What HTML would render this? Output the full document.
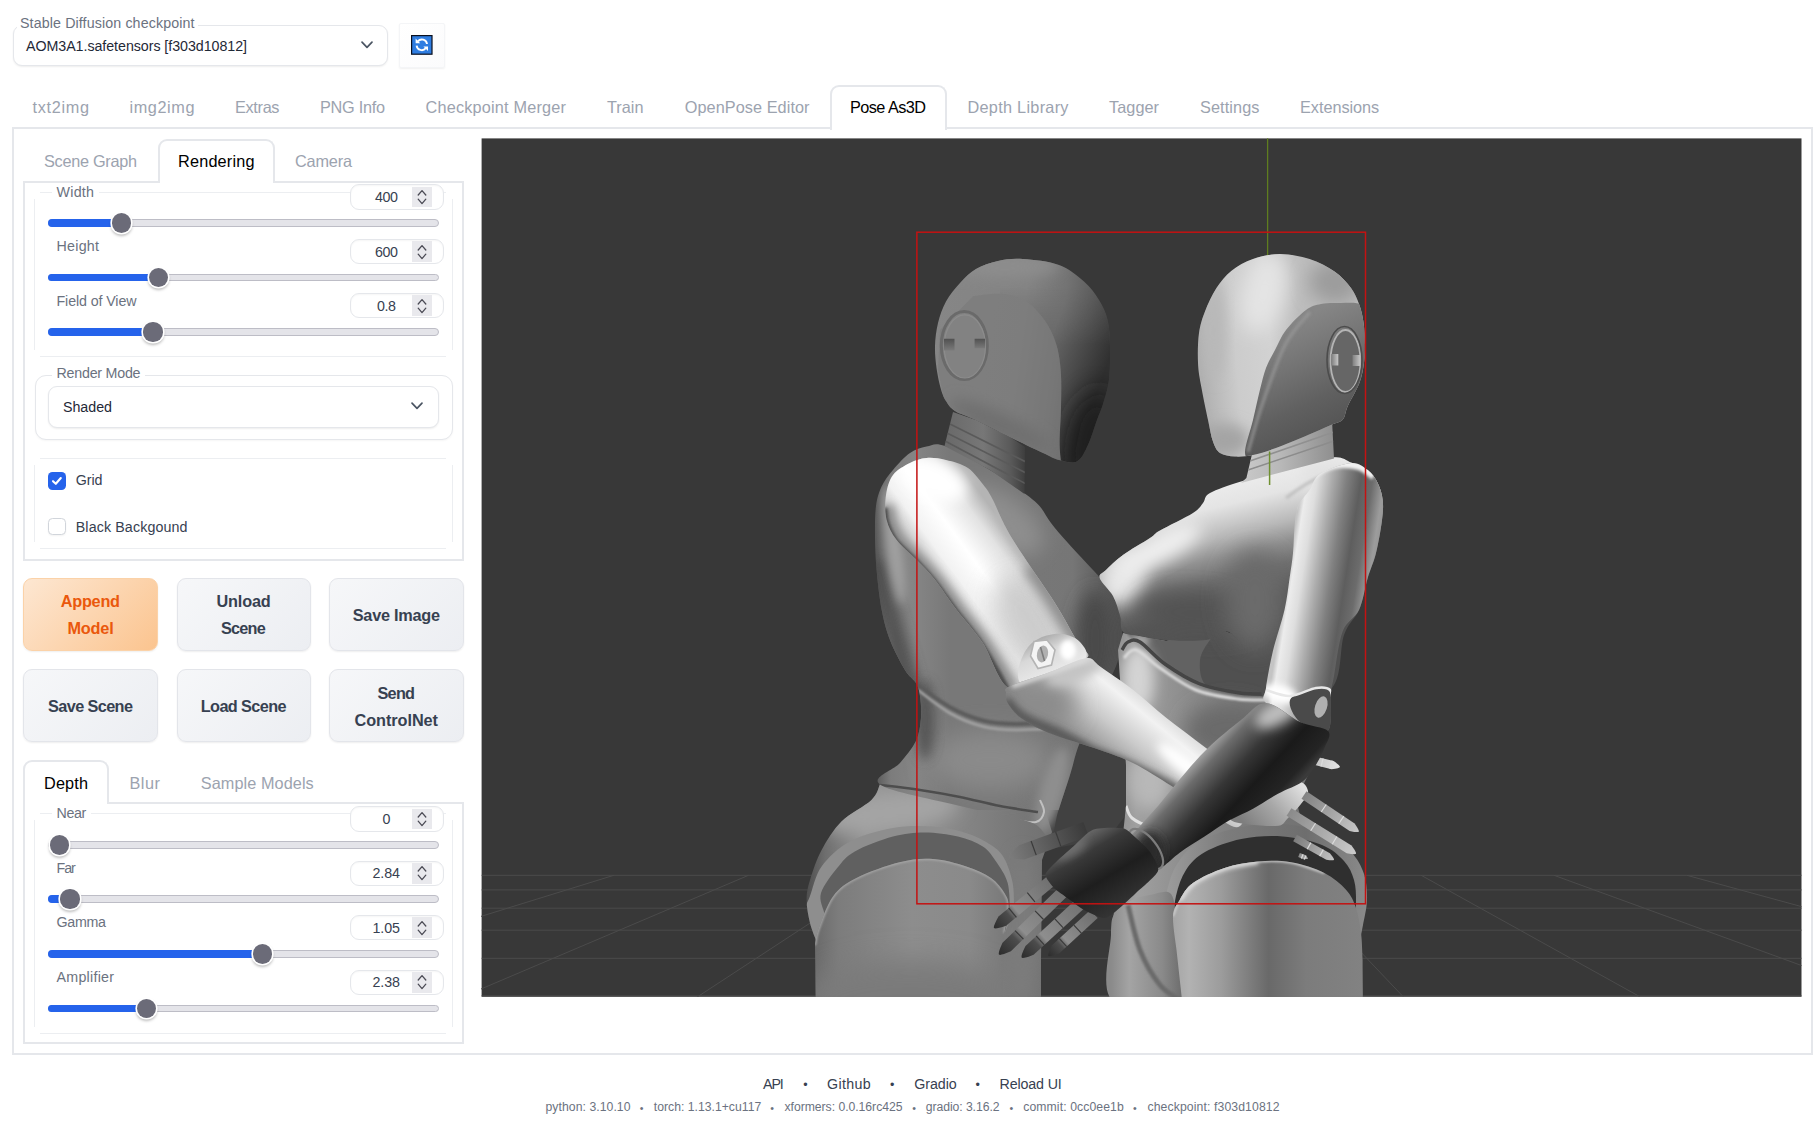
<!DOCTYPE html>
<html lang="en"><head><meta charset="utf-8"><title>Stable Diffusion</title>
<style>
html,body{margin:0;padding:0;background:#fff}
#root{position:relative;width:1814px;height:1143px;overflow:hidden;background:#fff;font-family:"Liberation Sans", sans-serif}
.b{position:absolute;display:block}
.t{position:absolute;white-space:pre;line-height:normal;font-family:"Liberation Sans", sans-serif}
</style></head>
<body><div id="root">
<div class="b" style="left:12px;top:127px;width:1801px;height:928px;border:2.2px solid #e5e7eb;box-sizing:border-box"></div>
<div class="b" style="left:830px;top:85px;width:116.5px;height:45px;border:2.2px solid #e5e7eb;border-bottom:none;border-radius:9px 9px 0 0;background:#fff;box-sizing:border-box"></div>
<div class="b" style="left:12.5px;top:24.5px;width:375.0px;height:41.0px;border:1px solid #e5e7eb;border-radius:9px;box-shadow:0 1px 2px rgba(0,0,0,.07);background:#fff;box-sizing:border-box"></div>
<div class="b" style="left:17px;top:14px;width:181px;height:16px;background:#fff"></div>
<svg class="b" style="left:360px;top:40px" width="14" height="10" viewBox="0 0 14 10"><path d="M2 2.2 L7 7.4 L12 2.2" fill="none" stroke="#4b5563" stroke-width="1.7" stroke-linecap="round" stroke-linejoin="round"/></svg>
<div class="b" style="left:398.5px;top:23px;width:46.0px;height:45px;border:1px solid #f4f5f7;border-radius:2px;box-shadow:0 1px 2px rgba(0,0,0,.06);background:linear-gradient(135deg,#fff,#fbfbfc);box-sizing:border-box"></div>
<svg class="b" style="left:410px;top:34px" width="24" height="22" viewBox="0 0 24 22"><rect x="1.6" y="1.6" width="20.4" height="18.6" fill="#2f7de1" stroke="#0a0f1e" stroke-width="1.2"/><path d="M6.6 11.6a5.2 5.2 0 0 0 9.2 2.6" fill="none" stroke="#fff" stroke-width="1.9"/><path d="M17 10a5.2 5.2 0 0 0 -9.2 -2.6" fill="none" stroke="#fff" stroke-width="1.9"/><path d="M5.6 4.6v4.6h4.6z" fill="#fff"/><path d="M18 17v-4.6h-4.6z" fill="#fff"/></svg>
<div class="b" style="left:23px;top:181px;width:440.5px;height:380px;border:2.2px solid #e5e7eb;box-sizing:border-box"></div>
<div class="b" style="left:158px;top:139px;width:116.5px;height:44.400000000000006px;border:2.2px solid #e5e7eb;border-bottom:none;border-radius:9px 9px 0 0;background:#fff;box-sizing:border-box"></div>
<div class="b" style="left:23px;top:802px;width:440.5px;height:241.5px;border:2.2px solid #e5e7eb;box-sizing:border-box"></div>
<div class="b" style="left:23px;top:760px;width:86px;height:44.39999999999998px;border:2.2px solid #e5e7eb;border-bottom:none;border-radius:9px 9px 0 0;background:#fff;box-sizing:border-box"></div>
<div class="b" style="left:40px;top:192px;width:406px;height:1px;background:#eceef1"></div>
<div class="b" style="left:40px;top:355.5px;width:406px;height:1.0px;background:#eceef1"></div>
<div class="b" style="left:34px;top:199px;width:1px;height:150.5px;background:#eceef1"></div>
<div class="b" style="left:451.5px;top:199px;width:1.0px;height:150.5px;background:#eceef1"></div>
<div class="b" style="left:40px;top:457.5px;width:406px;height:1.0px;background:#eceef1"></div>
<div class="b" style="left:40px;top:548px;width:406px;height:1px;background:#eceef1"></div>
<div class="b" style="left:34px;top:464.5px;width:1px;height:77.5px;background:#eceef1"></div>
<div class="b" style="left:451.5px;top:464.5px;width:1.0px;height:77.5px;background:#eceef1"></div>
<div class="b" style="left:40px;top:813px;width:406px;height:1px;background:#eceef1"></div>
<div class="b" style="left:40px;top:1032.5px;width:406px;height:1.0px;background:#eceef1"></div>
<div class="b" style="left:34px;top:820px;width:1px;height:206.5px;background:#eceef1"></div>
<div class="b" style="left:451.5px;top:820px;width:1.0px;height:206.5px;background:#eceef1"></div>
<div class="b" style="left:350px;top:184.3px;width:94px;height:25.399999999999977px;border:1px solid #e5e7eb;border-radius:9px;background:#fff;box-sizing:border-box;box-shadow:inset 0 1px 2px rgba(0,0,0,.04)"></div>
<div class="b" style="left:412px;top:186.5px;width:20px;height:20.80000000000001px;background:#e9e9ed"></div>
<svg class="b" style="left:415px;top:187px" width="14" height="20" viewBox="0 0 14 20"><path d="M3.2 8 L7 3.6 L10.8 8 M3.2 12.2 L7 16.6 L10.8 12.2" fill="none" stroke="#4b4b55" stroke-width="1.3" stroke-linecap="round" stroke-linejoin="round"/></svg>
<div class="b" style="left:48px;top:219.4px;width:390.5px;height:7.199999999999989px;background:#e4e4e9;border:1px solid #bdbdc6;border-radius:4px;box-sizing:border-box"></div>
<div class="b" style="left:48px;top:219.4px;width:73.5px;height:7.199999999999989px;background:#2563eb;border-radius:4px 0 0 4px"></div>
<div class="b" style="left:111.9px;top:213.4px;width:19.19999999999999px;height:19.19999999999999px;background:#6b6b78;border-radius:50%;box-shadow:0 0 0 1.6px #fff,0 2px 3px 1px rgba(0,0,0,.28)"></div>
<div class="b" style="left:350px;top:238.8px;width:94px;height:25.399999999999977px;border:1px solid #e5e7eb;border-radius:9px;background:#fff;box-sizing:border-box;box-shadow:inset 0 1px 2px rgba(0,0,0,.04)"></div>
<div class="b" style="left:412px;top:241.0px;width:20px;height:20.80000000000001px;background:#e9e9ed"></div>
<svg class="b" style="left:415px;top:241.5px" width="14" height="20" viewBox="0 0 14 20"><path d="M3.2 8 L7 3.6 L10.8 8 M3.2 12.2 L7 16.6 L10.8 12.2" fill="none" stroke="#4b4b55" stroke-width="1.3" stroke-linecap="round" stroke-linejoin="round"/></svg>
<div class="b" style="left:48px;top:273.9px;width:390.5px;height:7.2000000000000455px;background:#e4e4e9;border:1px solid #bdbdc6;border-radius:4px;box-sizing:border-box"></div>
<div class="b" style="left:48px;top:273.9px;width:110.75px;height:7.2000000000000455px;background:#2563eb;border-radius:4px 0 0 4px"></div>
<div class="b" style="left:149.15px;top:267.9px;width:19.19999999999999px;height:19.200000000000045px;background:#6b6b78;border-radius:50%;box-shadow:0 0 0 1.6px #fff,0 2px 3px 1px rgba(0,0,0,.28)"></div>
<div class="b" style="left:350px;top:292.8px;width:94px;height:25.399999999999977px;border:1px solid #e5e7eb;border-radius:9px;background:#fff;box-sizing:border-box;box-shadow:inset 0 1px 2px rgba(0,0,0,.04)"></div>
<div class="b" style="left:412px;top:295.0px;width:20px;height:20.80000000000001px;background:#e9e9ed"></div>
<svg class="b" style="left:415px;top:295.5px" width="14" height="20" viewBox="0 0 14 20"><path d="M3.2 8 L7 3.6 L10.8 8 M3.2 12.2 L7 16.6 L10.8 12.2" fill="none" stroke="#4b4b55" stroke-width="1.3" stroke-linecap="round" stroke-linejoin="round"/></svg>
<div class="b" style="left:48px;top:328.4px;width:390.5px;height:7.2000000000000455px;background:#e4e4e9;border:1px solid #bdbdc6;border-radius:4px;box-sizing:border-box"></div>
<div class="b" style="left:48px;top:328.4px;width:105px;height:7.2000000000000455px;background:#2563eb;border-radius:4px 0 0 4px"></div>
<div class="b" style="left:143.4px;top:322.4px;width:19.19999999999999px;height:19.200000000000045px;background:#6b6b78;border-radius:50%;box-shadow:0 0 0 1.6px #fff,0 2px 3px 1px rgba(0,0,0,.28)"></div>
<div class="b" style="left:350px;top:806.3px;width:94px;height:25.40000000000009px;border:1px solid #e5e7eb;border-radius:9px;background:#fff;box-sizing:border-box;box-shadow:inset 0 1px 2px rgba(0,0,0,.04)"></div>
<div class="b" style="left:412px;top:808.5px;width:20px;height:20.799999999999955px;background:#e9e9ed"></div>
<svg class="b" style="left:415px;top:809px" width="14" height="20" viewBox="0 0 14 20"><path d="M3.2 8 L7 3.6 L10.8 8 M3.2 12.2 L7 16.6 L10.8 12.2" fill="none" stroke="#4b4b55" stroke-width="1.3" stroke-linecap="round" stroke-linejoin="round"/></svg>
<div class="b" style="left:48px;top:841.4px;width:390.5px;height:7.2000000000000455px;background:#e4e4e9;border:1px solid #bdbdc6;border-radius:4px;box-sizing:border-box"></div>
<div class="b" style="left:49.9px;top:835.4px;width:19.199999999999996px;height:19.200000000000045px;background:#6b6b78;border-radius:50%;box-shadow:0 0 0 1.6px #fff,0 2px 3px 1px rgba(0,0,0,.28)"></div>
<div class="b" style="left:350px;top:860.5999999999999px;width:94px;height:25.40000000000009px;border:1px solid #e5e7eb;border-radius:9px;background:#fff;box-sizing:border-box;box-shadow:inset 0 1px 2px rgba(0,0,0,.04)"></div>
<div class="b" style="left:412px;top:862.8px;width:20px;height:20.799999999999955px;background:#e9e9ed"></div>
<svg class="b" style="left:415px;top:863.3px" width="14" height="20" viewBox="0 0 14 20"><path d="M3.2 8 L7 3.6 L10.8 8 M3.2 12.2 L7 16.6 L10.8 12.2" fill="none" stroke="#4b4b55" stroke-width="1.3" stroke-linecap="round" stroke-linejoin="round"/></svg>
<div class="b" style="left:48px;top:895.4px;width:390.5px;height:7.2000000000000455px;background:#e4e4e9;border:1px solid #bdbdc6;border-radius:4px;box-sizing:border-box"></div>
<div class="b" style="left:48px;top:895.4px;width:22px;height:7.2000000000000455px;background:#2563eb;border-radius:4px 0 0 4px"></div>
<div class="b" style="left:60.4px;top:889.4px;width:19.199999999999996px;height:19.200000000000045px;background:#6b6b78;border-radius:50%;box-shadow:0 0 0 1.6px #fff,0 2px 3px 1px rgba(0,0,0,.28)"></div>
<div class="b" style="left:350px;top:915.0999999999999px;width:94px;height:25.40000000000009px;border:1px solid #e5e7eb;border-radius:9px;background:#fff;box-sizing:border-box;box-shadow:inset 0 1px 2px rgba(0,0,0,.04)"></div>
<div class="b" style="left:412px;top:917.3px;width:20px;height:20.799999999999955px;background:#e9e9ed"></div>
<svg class="b" style="left:415px;top:917.8px" width="14" height="20" viewBox="0 0 14 20"><path d="M3.2 8 L7 3.6 L10.8 8 M3.2 12.2 L7 16.6 L10.8 12.2" fill="none" stroke="#4b4b55" stroke-width="1.3" stroke-linecap="round" stroke-linejoin="round"/></svg>
<div class="b" style="left:48px;top:950.4px;width:390.5px;height:7.2000000000000455px;background:#e4e4e9;border:1px solid #bdbdc6;border-radius:4px;box-sizing:border-box"></div>
<div class="b" style="left:48px;top:950.4px;width:214.5px;height:7.2000000000000455px;background:#2563eb;border-radius:4px 0 0 4px"></div>
<div class="b" style="left:252.9px;top:944.4px;width:19.200000000000017px;height:19.200000000000045px;background:#6b6b78;border-radius:50%;box-shadow:0 0 0 1.6px #fff,0 2px 3px 1px rgba(0,0,0,.28)"></div>
<div class="b" style="left:350px;top:969.5999999999999px;width:94px;height:25.40000000000009px;border:1px solid #e5e7eb;border-radius:9px;background:#fff;box-sizing:border-box;box-shadow:inset 0 1px 2px rgba(0,0,0,.04)"></div>
<div class="b" style="left:412px;top:971.8px;width:20px;height:20.799999999999955px;background:#e9e9ed"></div>
<svg class="b" style="left:415px;top:972.3px" width="14" height="20" viewBox="0 0 14 20"><path d="M3.2 8 L7 3.6 L10.8 8 M3.2 12.2 L7 16.6 L10.8 12.2" fill="none" stroke="#4b4b55" stroke-width="1.3" stroke-linecap="round" stroke-linejoin="round"/></svg>
<div class="b" style="left:48px;top:1004.9px;width:390.5px;height:7.2000000000000455px;background:#e4e4e9;border:1px solid #bdbdc6;border-radius:4px;box-sizing:border-box"></div>
<div class="b" style="left:48px;top:1004.9px;width:98.75px;height:7.2000000000000455px;background:#2563eb;border-radius:4px 0 0 4px"></div>
<div class="b" style="left:137.15px;top:998.9px;width:19.19999999999999px;height:19.200000000000045px;background:#6b6b78;border-radius:50%;box-shadow:0 0 0 1.6px #fff,0 2px 3px 1px rgba(0,0,0,.28)"></div>
<div class="b" style="left:52px;top:186px;width:47px;height:14px;background:#fff"></div>
<div class="b" style="left:52px;top:808px;width:39px;height:14px;background:#fff"></div>
<div class="b" style="left:34.5px;top:374.5px;width:418.0px;height:65.0px;border:1px solid #e5e7eb;border-radius:11px;background:#fff;box-sizing:border-box;box-shadow:0 1px 2px rgba(0,0,0,.04)"></div>
<div class="b" style="left:52px;top:366px;width:93px;height:16px;background:#fff"></div>
<div class="b" style="left:48px;top:386px;width:390.5px;height:41.5px;border:1px solid #e5e7eb;border-radius:9px;background:#fff;box-sizing:border-box;box-shadow:0 1px 2px rgba(0,0,0,.07)"></div>
<svg class="b" style="left:409.5px;top:401px" width="14" height="10" viewBox="0 0 14 10"><path d="M2 2.2 L7 7.4 L12 2.2" fill="none" stroke="#4b5563" stroke-width="1.7" stroke-linecap="round" stroke-linejoin="round"/></svg>
<div class="b" style="left:48px;top:472px;width:18px;height:17.600000000000023px;background:#2563eb;border-radius:4.5px"></div>
<svg class="b" style="left:48px;top:472px" width="18" height="18" viewBox="0 0 18 18"><path d="M5 9.2 L7.8 11.8 L12.8 6" fill="none" stroke="#fff" stroke-width="2.1" stroke-linecap="round" stroke-linejoin="round"/></svg>
<div class="b" style="left:48px;top:517.5px;width:18px;height:17.700000000000045px;background:#fff;border:1px solid #d1d5db;border-radius:4.5px;box-sizing:border-box;box-shadow:0 1px 2px rgba(0,0,0,.05)"></div>
<div class="b" style="left:23.25px;top:578.25px;width:134.75px;height:72.25px;background:linear-gradient(135deg,#fde7d2 0%,#fbc48f 100%);border:1px solid #fbd2a8;border-radius:9px;box-sizing:border-box;box-shadow:0 1px 2px rgba(0,0,0,.07)"></div>
<div class="b" style="left:23.25px;top:669px;width:134.75px;height:72.5px;background:linear-gradient(135deg,#f6f7f9 0%,#eceef2 100%);border:1px solid #e3e5ea;border-radius:9px;box-sizing:border-box;box-shadow:0 1px 2px rgba(0,0,0,.07)"></div>
<div class="b" style="left:176.5px;top:578.25px;width:134.75px;height:72.25px;background:linear-gradient(135deg,#f6f7f9 0%,#eceef2 100%);border:1px solid #e3e5ea;border-radius:9px;box-sizing:border-box;box-shadow:0 1px 2px rgba(0,0,0,.07)"></div>
<div class="b" style="left:176.5px;top:669px;width:134.75px;height:72.5px;background:linear-gradient(135deg,#f6f7f9 0%,#eceef2 100%);border:1px solid #e3e5ea;border-radius:9px;box-sizing:border-box;box-shadow:0 1px 2px rgba(0,0,0,.07)"></div>
<div class="b" style="left:329px;top:578.25px;width:134.75px;height:72.25px;background:linear-gradient(135deg,#f6f7f9 0%,#eceef2 100%);border:1px solid #e3e5ea;border-radius:9px;box-sizing:border-box;box-shadow:0 1px 2px rgba(0,0,0,.07)"></div>
<div class="b" style="left:329px;top:669px;width:134.75px;height:72.5px;background:linear-gradient(135deg,#f6f7f9 0%,#eceef2 100%);border:1px solid #e3e5ea;border-radius:9px;box-sizing:border-box;box-shadow:0 1px 2px rgba(0,0,0,.07)"></div>
<svg class="b" style="left:481px;top:138px" width="1321" height="859" viewBox="481 138 1321 859"><defs><linearGradient id="g1" gradientUnits="userSpaceOnUse" x1="806" y1="0" x2="1046" y2="0"><stop offset="0" stop-color="#4e4e4e"/><stop offset="0.08" stop-color="#6e6e6e"/><stop offset="0.25" stop-color="#949494"/><stop offset="0.55" stop-color="#8c8c8c"/><stop offset="0.8" stop-color="#7c7c7c"/><stop offset="1" stop-color="#727272"/></linearGradient><filter id="b2" x="-50%" y="-50%" width="200%" height="200%"><feGaussianBlur stdDeviation="9"/></filter><filter id="b3" x="-50%" y="-50%" width="200%" height="200%"><feGaussianBlur stdDeviation="8"/></filter><clipPath id="c4"><path d="M880 784C878.6 786.7 877.9 793.7 871.5 800C865.1 806.3 849.8 813.3 841.5 821.6C833.2 829.9 826.9 840.3 821.6 850C816.4 859.7 812.5 871.7 810 880C807.5 888.3 806.6 892.8 806.6 900C806.6 907.2 808.4 916.3 810 923C811.6 929.7 815 937.2 816 940L815.8 1000L1041 1000L1041 960L1042 860L1052 832L1040 794Z"/></clipPath><linearGradient id="g5" gradientUnits="userSpaceOnUse" x1="815" y1="0" x2="1008" y2="0"><stop offset="0" stop-color="#6a6a6a"/><stop offset="0.12" stop-color="#7c7c7c"/><stop offset="0.5" stop-color="#8d8d8d"/><stop offset="0.8" stop-color="#8a8a8a"/><stop offset="1" stop-color="#787878"/></linearGradient><filter id="b6" x="-50%" y="-50%" width="200%" height="200%"><feGaussianBlur stdDeviation="1.2"/></filter><filter id="b7" x="-50%" y="-50%" width="200%" height="200%"><feGaussianBlur stdDeviation="14"/></filter><clipPath id="c8"><path d="M815 945C815.5 942.4 815.3 937.7 818.3 929.6C821.3 921.5 826.6 905 833 896.4C839.4 887.8 845.4 883.7 856.5 878C867.6 872.3 887 865.5 899.7 862.3C912.5 859.1 921.9 858.3 933 859C944.1 859.7 956.5 863.3 966.2 866.5C975.9 869.7 984.6 873.6 991 878C997.4 882.4 1001.5 888.3 1004.4 893C1007.3 897.7 1008.6 899.7 1008.6 906.4C1008.6 913.1 1005.1 928.6 1004.4 933L1002.8 1000L815.8 1000Z"/></clipPath><linearGradient id="g9" gradientUnits="userSpaceOnUse" x1="876" y1="0" x2="1122" y2="0"><stop offset="0" stop-color="#5a5a5a"/><stop offset="0.06" stop-color="#7c7c7c"/><stop offset="0.16" stop-color="#858585"/><stop offset="0.3" stop-color="#787878"/><stop offset="0.55" stop-color="#787878"/><stop offset="0.8" stop-color="#767676"/><stop offset="1" stop-color="#4e4e4e"/></linearGradient><filter id="b10" x="-50%" y="-50%" width="200%" height="200%"><feGaussianBlur stdDeviation="6"/></filter><filter id="b11" x="-50%" y="-50%" width="200%" height="200%"><feGaussianBlur stdDeviation="5"/></filter><filter id="b12" x="-50%" y="-50%" width="200%" height="200%"><feGaussianBlur stdDeviation="12"/></filter><filter id="b13" x="-50%" y="-50%" width="200%" height="200%"><feGaussianBlur stdDeviation="10"/></filter><filter id="b14" x="-50%" y="-50%" width="200%" height="200%"><feGaussianBlur stdDeviation="0.8"/></filter><filter id="b15" x="-50%" y="-50%" width="200%" height="200%"><feGaussianBlur stdDeviation="0.6"/></filter><clipPath id="c16"><path d="M945 446C934.4 442.1 932.3 445.4 926.5 446.6C920.7 447.8 915.6 449.1 910 453C904.4 456.9 897.7 464.4 893 470C888.3 475.6 884.4 480.5 881.6 486.5C878.8 492.5 877.1 497.8 876 506C874.9 514.2 874.9 525.3 875 536C875.1 546.7 875.5 557.8 876.6 570C877.7 582.2 879.4 597.8 881.6 609.5C883.8 621.2 886.1 629.9 890 640C893.9 650.1 900.7 662.8 905 670C909.3 677.2 913.5 678.7 916 683C918.5 687.3 919.2 690.2 920 696C920.8 701.8 921.7 710.5 921 718C920.3 725.5 919.5 733.5 916 741C912.5 748.5 906 755.8 900 763C894 770.2 870 777.3 880 784.5C890 791.7 935 799.8 960 806C985 812.2 1015 816.7 1030 822C1045 827.3 1045.3 839.7 1050 838C1054.7 836.3 1054.7 822.5 1058 812C1061.3 801.5 1066.3 786.7 1070 775C1073.7 763.3 1075 754.5 1080 742C1085 729.5 1094 712.7 1100 700C1106 687.3 1112.7 674.3 1116 666C1119.3 657.7 1119 655.5 1120 650C1121 644.5 1122 638.7 1122 633C1122 627.3 1121.5 622.2 1120 616C1118.5 609.8 1116.3 602.3 1113 596C1109.7 589.7 1103.3 582.3 1100 578C1096.7 573.7 1098.3 575.8 1093 570C1087.7 564.2 1075 550.8 1068 543C1061 535.2 1055.8 529.2 1051 523C1046.2 516.8 1044 511 1039.5 506C1035 501 1032.2 499 1024 493C1015.8 487 1003.2 477.8 990 470C976.8 462.2 955.6 449.9 945 446Z"/></clipPath><linearGradient id="g17" gradientUnits="userSpaceOnUse" x1="948" y1="0" x2="1026" y2="0"><stop offset="0" stop-color="#6a6a6a"/><stop offset="0.45" stop-color="#777"/><stop offset="0.8" stop-color="#5a5a5a"/><stop offset="1" stop-color="#3c3c3c"/></linearGradient><clipPath id="c18"><path d="M953 412L976 420L1010 437L1025 447L1024.5 494L990 470L944.5 446Z"/></clipPath><linearGradient id="g19" gradientUnits="userSpaceOnUse" x1="935" y1="300" x2="1112" y2="325"><stop offset="0" stop-color="#868686"/><stop offset="0.5" stop-color="#838383"/><stop offset="0.72" stop-color="#737373"/><stop offset="0.88" stop-color="#5c5c5c"/><stop offset="1" stop-color="#484848"/></linearGradient><filter id="b20" x="-50%" y="-50%" width="200%" height="200%"><feGaussianBlur stdDeviation="7"/></filter><linearGradient id="g21" gradientUnits="userSpaceOnUse" x1="1050" y1="340" x2="1108" y2="362"><stop offset="0" stop-color="#686868"/><stop offset="0.5" stop-color="#4c4c4c"/><stop offset="1" stop-color="#303030"/></linearGradient><clipPath id="c22"><path d="M1000 250L973.4 296C978.1 295.6 993 293 1001.7 293.8C1010.4 294.6 1018.3 296.6 1025.4 300.9C1032.5 305.2 1039.2 312.7 1044.3 319.8C1049.4 326.9 1053.2 334.8 1056 343.4C1058.8 352 1060 361.1 1060.8 371.7C1061.6 382.3 1061.2 395.2 1061 407C1060.8 418.8 1059.6 433.4 1059.6 442.6C1059.6 451.8 1060.8 458.8 1061 462L1130 470L1130 250Z"/></clipPath><linearGradient id="g23" gradientUnits="userSpaceOnUse" x1="0" y1="288" x2="0" y2="345"><stop offset="0" stop-color="#000"/><stop offset="1" stop-color="#fff"/></linearGradient><mask id="m24" maskUnits="userSpaceOnUse" x="481" y="138" width="1321" height="859"><rect x="481" y="138" width="1321" height="859" fill="url(#g23)"/></mask><linearGradient id="g25" gradientUnits="userSpaceOnUse" x1="0" y1="338" x2="0" y2="351"><stop offset="0" stop-color="#4e4e4e"/><stop offset="1" stop-color="#7c7c7c"/></linearGradient><linearGradient id="g26" gradientUnits="userSpaceOnUse" x1="0" y1="338" x2="0" y2="349"><stop offset="0" stop-color="#4e4e4e"/><stop offset="1" stop-color="#7c7c7c"/></linearGradient><clipPath id="c27"><path d="M1023 259C1033.2 259.7 1048.8 261.2 1059 265C1069.2 268.8 1077.3 275.7 1084 281.5C1090.7 287.3 1095.1 293.6 1099 300C1102.9 306.4 1105.8 312.3 1107.6 320C1109.4 327.7 1109.8 336 1110 346C1110.2 356 1110.2 370.3 1109 380C1107.8 389.7 1105 397.3 1103 404C1101 410.7 1099.5 413.2 1097 420C1094.5 426.8 1091.3 438.1 1088 445C1084.7 451.9 1081.8 459 1077 461.5C1072.2 464 1064.7 461.4 1059 460C1053.3 458.6 1051.2 456.8 1043 453C1034.8 449.2 1021.2 442.5 1010 437C998.8 431.5 985.2 424.3 976 420C966.8 415.7 960 414.2 955 411C950 407.8 948.3 404.6 946 401C943.7 397.4 942.6 395 941 389.5C939.4 384 937.5 375.2 936.5 368C935.5 360.8 934.8 353.5 935 346C935.2 338.5 936.2 330.4 938 323C939.8 315.6 942.3 308.2 946 301.5C949.7 294.8 955 288.4 960 283C965 277.6 969.7 272.7 976 269C982.3 265.3 990.2 262.7 998 261C1005.8 259.3 1012.8 258.3 1023 259Z"/></clipPath><linearGradient id="g28" gradientUnits="userSpaceOnUse" x1="905" y1="590" x2="1000" y2="520"><stop offset="0" stop-color="#6c6c6c"/><stop offset="0.18" stop-color="#a8a8a8"/><stop offset="0.42" stop-color="#f2f2f2"/><stop offset="0.62" stop-color="#ffffff"/><stop offset="0.85" stop-color="#e2e2e2"/><stop offset="1" stop-color="#b4b4b4"/></linearGradient><filter id="b29" x="-50%" y="-50%" width="200%" height="200%"><feGaussianBlur stdDeviation="4"/></filter><filter id="b30" x="-50%" y="-50%" width="200%" height="200%"><feGaussianBlur stdDeviation="1.6"/></filter><filter id="b31" x="-50%" y="-50%" width="200%" height="200%"><feGaussianBlur stdDeviation="3"/></filter><clipPath id="c32"><path d="M886 495C887.1 487.6 889 480.3 893 475C897 469.7 904.4 465.8 910 463C915.6 460.2 920.5 458.5 926.5 458C932.5 457.5 939.1 458.3 946 460C952.9 461.7 961.6 463.6 968 468C974.4 472.4 980.4 481.2 984.6 486.5C988.8 491.8 990.1 494.4 993 500C995.9 505.6 998.8 513.5 1002 520C1005.2 526.5 1007.7 531.3 1012.4 539C1017.1 546.7 1024.1 557.1 1030 566C1035.9 574.9 1042.8 584.6 1048 592.4C1053.2 600.2 1057.2 606.6 1061 613C1064.8 619.4 1067.7 625 1070.8 630.5C1073.9 636 1077 641.1 1079.7 645.7C1082.4 650.3 1092 653 1087 658C1082 663 1063 671 1050 676C1037 681 1020.2 693.5 1009 688C997.8 682.5 991.6 656.1 982.8 643C974 629.9 964.4 620.1 956.4 609.5C948.4 598.9 941.4 587.8 934.8 579.5C928.1 571.2 922.9 566.2 916.5 559.6C910.1 553 901.6 546.4 896.6 539.7C891.6 533.1 888.4 527.2 886.6 519.7C884.8 512.2 884.9 502.4 886 495Z"/></clipPath><linearGradient id="g33" gradientUnits="userSpaceOnUse" x1="1040" y1="636" x2="1060" y2="680"><stop offset="0" stop-color="#a8a8a8"/><stop offset="0.35" stop-color="#d8d8d8"/><stop offset="1" stop-color="#f0f0f0"/></linearGradient><filter id="b34" x="-50%" y="-50%" width="200%" height="200%"><feGaussianBlur stdDeviation="2"/></filter><linearGradient id="g35" gradientUnits="userSpaceOnUse" x1="1196" y1="478" x2="1236" y2="640"><stop offset="0" stop-color="#f0f0f0"/><stop offset="0.2" stop-color="#e4e4e4"/><stop offset="0.38" stop-color="#b8b8b8"/><stop offset="0.5" stop-color="#909090"/><stop offset="0.62" stop-color="#707070"/><stop offset="0.8" stop-color="#565656"/><stop offset="1" stop-color="#505050"/></linearGradient><filter id="b36" x="-50%" y="-50%" width="200%" height="200%"><feGaussianBlur stdDeviation="11"/></filter><filter id="b37" x="-50%" y="-50%" width="200%" height="200%"><feGaussianBlur stdDeviation="1.5"/></filter><linearGradient id="g38" gradientUnits="userSpaceOnUse" x1="1111" y1="0" x2="1365" y2="0"><stop offset="0" stop-color="#8a8a8a"/><stop offset="0.1" stop-color="#a0a0a0"/><stop offset="0.3" stop-color="#8c8c8c"/><stop offset="0.6" stop-color="#777"/><stop offset="1" stop-color="#6c6c6c"/></linearGradient><clipPath id="c39"><path d="M1222 630C1228.7 628 1237.8 626.3 1250 628C1262.2 629.7 1287.5 627.2 1295 640C1302.5 652.8 1299.8 695.5 1295 705C1290.2 714.5 1276.8 699.2 1266 697C1255.2 694.8 1240.2 694.2 1230 692C1219.8 689.8 1210 689.3 1205 684C1200 678.7 1199.2 667.3 1200 660C1200.8 652.7 1206.3 645 1210 640C1213.7 635 1215.3 632 1222 630Z"/></clipPath><filter id="b40" x="-50%" y="-50%" width="200%" height="200%"><feGaussianBlur stdDeviation="0.7"/></filter><clipPath id="c41"><path d="M1118 650L1126 765L1126 806L1124 825L1113 920L1111 933L1112 1000L1363 1000L1361 933L1365 900L1362.6 875L1349 855L1324 836.6L1300 815L1296 799.5L1307.7 776L1321 751L1327.7 731L1300 700L1270 650L1224 631L1166 641L1123 633Z"/></clipPath><linearGradient id="g42" gradientUnits="userSpaceOnUse" x1="1166" y1="0" x2="1366" y2="0"><stop offset="0" stop-color="#9c9c9c"/><stop offset="0.3" stop-color="#7c7c7c"/><stop offset="0.7" stop-color="#6e6e6e"/><stop offset="1" stop-color="#8a8a8a"/></linearGradient><linearGradient id="g43" gradientUnits="userSpaceOnUse" x1="1111" y1="0" x2="1184" y2="0"><stop offset="0" stop-color="#8a8a8a"/><stop offset="0.25" stop-color="#a4a4a4"/><stop offset="0.7" stop-color="#8a8a8a"/><stop offset="1" stop-color="#6a6a6a"/></linearGradient><clipPath id="c44"><path d="M1111 935C1111.5 920.5 1111.3 918.9 1115 913C1118.7 907.1 1127.2 902.7 1133 899.7C1138.8 896.7 1143.8 896.1 1150 895C1156.2 893.9 1165.7 889.5 1170 893C1174.3 896.5 1174.7 906.5 1176 916C1177.3 925.5 1176.7 936 1178 950C1179.3 964 1195 991.7 1184 1000C1173 1008.3 1124.2 1010.8 1112 1000C1099.8 989.2 1110.5 949.5 1111 935Z"/></clipPath><linearGradient id="g45" gradientUnits="userSpaceOnUse" x1="1174" y1="0" x2="1363" y2="0"><stop offset="0" stop-color="#a6a6a6"/><stop offset="0.08" stop-color="#b2b2b2"/><stop offset="0.25" stop-color="#9c9c9c"/><stop offset="0.5" stop-color="#696969"/><stop offset="0.7" stop-color="#7c7c7c"/><stop offset="1" stop-color="#828282"/></linearGradient><clipPath id="c46"><path d="M1176.5 950C1175.9 944.3 1172.5 924.4 1173 916C1173.5 907.6 1176.5 905.2 1179.8 899.7C1183.1 894.2 1185.5 888.3 1193 883C1200.5 877.7 1213.8 871.6 1224.6 868C1235.4 864.4 1246.9 862.5 1258 861.5C1269.1 860.5 1279.9 860.4 1291 862.3C1302.1 864.2 1315.2 868.4 1324.4 873C1333.6 877.6 1340.7 883.9 1346 889.7C1351.3 895.5 1353.5 900.8 1356 908C1358.5 915.2 1359.9 924.3 1361 933C1362.1 941.7 1362.3 955.5 1362.6 960L1362.6 1000L1182 1000Z"/></clipPath><clipPath id="c47"><path d="M1099.7 578C1098.5 573.7 1102.1 573.8 1106 570C1109.9 566.2 1115.7 560.3 1123 555C1130.3 549.7 1143.8 542.1 1150 538C1156.2 533.9 1152.8 534.7 1160 530.5C1167.2 526.3 1185.8 517.6 1193 513C1200.2 508.4 1200.2 506.3 1203 503C1205.8 499.7 1203.7 496.6 1210 493C1216.3 489.4 1227.7 485.7 1241 481.5C1254.3 477.3 1274.7 472 1290 468C1305.3 464 1322.8 458.3 1333 457.4C1343.2 456.5 1345.2 460.3 1351 462.4C1356.8 464.5 1363.2 466.6 1367.7 470C1372.2 473.4 1375.2 478 1377.7 483C1380.2 488 1382 493.8 1382.7 500C1383.4 506.2 1383.1 511.2 1382 520C1380.9 528.8 1378.4 543.3 1376 553C1373.6 562.7 1370.5 568.5 1367.7 578C1364.9 587.5 1363 600.5 1359 610C1355 619.5 1348.8 621.7 1344 635C1339.2 648.3 1342.7 679.3 1330 690C1317.3 700.7 1279.7 701.3 1268 699C1256.3 696.7 1264 684.5 1260 676C1256 667.5 1248.5 654.8 1244 648C1239.5 641.2 1236.3 637.8 1233 635C1229.7 632.2 1228.5 630.7 1224 631.5C1219.5 632.3 1215.8 638.6 1206 640C1196.2 641.4 1176 640.7 1165 640C1154 639.3 1147 637.3 1140 636C1133 634.7 1126.3 635.3 1123 632C1119.7 628.7 1121.7 622 1120 616C1118.3 610 1116.4 602.3 1113 596C1109.6 589.7 1100.9 582.3 1099.7 578Z"/></clipPath><linearGradient id="g48" gradientUnits="userSpaceOnUse" x1="1245" y1="0" x2="1335" y2="0"><stop offset="0" stop-color="#c8c8c8"/><stop offset="0.4" stop-color="#b8b8b8"/><stop offset="1" stop-color="#8e8e8e"/></linearGradient><filter id="b49" x="-50%" y="-50%" width="200%" height="200%"><feGaussianBlur stdDeviation="0.5"/></filter><clipPath id="c50"><path d="M1253 450L1246.4 478L1241 483L1290 470L1334 458.5L1332 420L1301 436L1276 446Z"/></clipPath><linearGradient id="g51" gradientUnits="userSpaceOnUse" x1="1198" y1="340" x2="1300" y2="330"><stop offset="0" stop-color="#b0b0b0"/><stop offset="0.35" stop-color="#cccccc"/><stop offset="0.7" stop-color="#d2d2d2"/><stop offset="1" stop-color="#bcbcbc"/></linearGradient><linearGradient id="g52" gradientUnits="userSpaceOnUse" x1="1285" y1="325" x2="1335" y2="430"><stop offset="0" stop-color="#868686"/><stop offset="0.35" stop-color="#747474"/><stop offset="0.7" stop-color="#606060"/><stop offset="1" stop-color="#545454"/></linearGradient><linearGradient id="g53" gradientUnits="userSpaceOnUse" x1="1331" y1="0" x2="1339" y2="0"><stop offset="0" stop-color="#7a7a7a"/><stop offset="1" stop-color="#cfcfcf"/></linearGradient><linearGradient id="g54" gradientUnits="userSpaceOnUse" x1="1352" y1="0" x2="1360" y2="0"><stop offset="0" stop-color="#7a7a7a"/><stop offset="1" stop-color="#c4c4c4"/></linearGradient><clipPath id="c55"><path d="M1279.7 254C1289.1 254 1300.5 256.1 1309.6 259C1318.7 261.9 1327.6 266.7 1334.5 271.5C1341.4 276.3 1346.8 282.4 1351 288C1355.2 293.6 1357.3 299.2 1359.4 305C1361.5 310.8 1362.7 316.3 1363.6 323C1364.5 329.7 1364.9 338.3 1365 345C1365.1 351.7 1364.9 356.7 1364 363C1363.1 369.3 1362.1 375.8 1359.4 383C1356.7 390.2 1350.6 399.9 1347.8 406C1345 412.1 1345.6 416.3 1342.8 419.5C1340 422.7 1338 421.9 1331 425C1324 428.1 1310.2 434.2 1301 438C1291.8 441.8 1284 445.2 1276 448C1268 450.8 1259.8 453.6 1253 455C1246.2 456.4 1240.5 456.9 1235 456.6C1229.5 456.3 1223.7 455.5 1220 453C1216.3 450.5 1215 447.1 1213 441.6C1211 436.1 1209.9 428.9 1208 420C1206.1 411.1 1203.2 397.5 1201.5 388C1199.8 378.5 1198.4 372.2 1198 363C1197.6 353.8 1197.8 341.6 1199 333C1200.2 324.4 1202.1 318.9 1205 311.4C1207.9 303.9 1212.1 294.8 1216.5 288C1220.9 281.2 1225.4 275.5 1231.5 270.7C1237.6 265.9 1245 261.8 1253 259C1261 256.2 1270.3 254 1279.7 254Z"/></clipPath><linearGradient id="g56" gradientUnits="userSpaceOnUse" x1="1290" y1="560" x2="1385" y2="575"><stop offset="0" stop-color="#c4c4c4"/><stop offset="0.05" stop-color="#ececec"/><stop offset="0.15" stop-color="#dedede"/><stop offset="0.3" stop-color="#adadad"/><stop offset="0.45" stop-color="#808080"/><stop offset="0.6" stop-color="#5e5e5e"/><stop offset="0.72" stop-color="#6c6c6c"/><stop offset="0.84" stop-color="#9c9c9c"/><stop offset="1" stop-color="#8c8c8c"/></linearGradient><filter id="b57" x="-50%" y="-50%" width="200%" height="200%"><feGaussianBlur stdDeviation="0"/></filter><clipPath id="c58"><path d="M1320 474C1313.1 478.5 1313.3 484.7 1309.6 490C1305.9 495.3 1300.5 500 1298 506C1295.5 512 1295.4 518.2 1294.6 526C1293.8 533.8 1293.8 544.3 1293 553C1292.2 561.7 1291 568.6 1289.6 578C1288.2 587.4 1287.4 597.2 1284.6 609.5C1281.8 621.8 1275.9 638.4 1272.8 651.5C1269.7 664.6 1267.1 679.4 1266 688C1264.9 696.6 1260.3 697.3 1266 703C1271.7 708.7 1289.7 717.3 1300 722C1310.3 726.7 1322.5 735.8 1327.7 731C1332.9 726.2 1330 702.2 1331 693C1332 683.8 1332.1 686.2 1334 676C1335.9 665.8 1338.4 642.5 1342.6 631.5C1346.8 620.5 1354.8 618.9 1359 610C1363.2 601.1 1364.9 587.5 1367.7 578C1370.5 568.5 1373.6 562.7 1376 553C1378.4 543.3 1380.9 528.8 1382 520C1383.1 511.2 1383.4 506.2 1382.7 500C1382 493.8 1380.2 488 1377.7 483C1375.2 478 1372.2 473.3 1367.7 470C1363.2 466.7 1359 462.3 1351 463C1343 463.7 1326.9 469.5 1320 474Z"/></clipPath><linearGradient id="g59" gradientUnits="userSpaceOnUse" x1="1085" y1="770" x2="1150" y2="690"><stop offset="0" stop-color="#626262"/><stop offset="0.22" stop-color="#969696"/><stop offset="0.5" stop-color="#cacaca"/><stop offset="0.78" stop-color="#f2f2f2"/><stop offset="1" stop-color="#d0d0d0"/></linearGradient><filter id="b60" x="-50%" y="-50%" width="200%" height="200%"><feGaussianBlur stdDeviation="3.5"/></filter><clipPath id="c61"><path d="M1006 693C1006.3 690.2 1002.1 689.9 1009.4 686.4C1016.7 682.9 1037.2 676.7 1050 672C1062.8 667.3 1077.6 659.1 1085.9 658.2C1094.2 657.3 1092.2 661.2 1100 666.5C1107.8 671.8 1121.9 681.2 1133 689.8C1144.1 698.4 1154.3 708.3 1166.5 718C1178.7 727.7 1192.1 737.3 1206 748C1219.9 758.7 1244.3 769 1250 782C1255.7 795 1246.7 821 1240 826C1233.3 831 1221.4 818.7 1210 812C1198.6 805.3 1184.3 794.2 1171.5 786C1158.7 777.8 1144.9 769 1133 763C1121.1 757 1114 755 1100 750C1086 745 1062.2 738.3 1049 733C1035.8 727.7 1027.9 723 1021 718C1014.1 713 1010.2 707.2 1007.7 703C1005.2 698.8 1005.7 695.8 1006 693Z"/></clipPath><linearGradient id="g62" gradientUnits="userSpaceOnUse" x1="1250" y1="830" x2="1300" y2="785"><stop offset="0" stop-color="#7e7e7e"/><stop offset="0.5" stop-color="#a8a8a8"/><stop offset="1" stop-color="#e0e0e0"/></linearGradient><linearGradient id="g63" gradientUnits="userSpaceOnUse" x1="1299" y1="855" x2="1308" y2="858.6"><stop offset="0" stop-color="#8a8a8a"/><stop offset="1" stop-color="#b0b0b0"/></linearGradient><linearGradient id="g64" gradientUnits="userSpaceOnUse" x1="1295" y1="838" x2="1334" y2="859.8"><stop offset="0" stop-color="#7c7c7c"/><stop offset="1" stop-color="#c4c4c4"/></linearGradient><linearGradient id="g65" gradientUnits="userSpaceOnUse" x1="1289" y1="812" x2="1356" y2="853.7"><stop offset="0" stop-color="#8a8a8a"/><stop offset="1" stop-color="#cccccc"/></linearGradient><linearGradient id="g66" gradientUnits="userSpaceOnUse" x1="1304" y1="795" x2="1358.8" y2="831.7"><stop offset="0" stop-color="#828282"/><stop offset="1" stop-color="#c8c8c8"/></linearGradient><linearGradient id="g67" gradientUnits="userSpaceOnUse" x1="1312" y1="760" x2="1340" y2="767"><stop offset="0" stop-color="#c0c0c0"/><stop offset="1" stop-color="#e6e6e6"/></linearGradient><linearGradient id="g68" gradientUnits="userSpaceOnUse" x1="1195" y1="760" x2="1262" y2="822"><stop offset="0" stop-color="#a4a4a4"/><stop offset="0.14" stop-color="#6c6c6c"/><stop offset="0.4" stop-color="#363636"/><stop offset="0.65" stop-color="#1a1a1a"/><stop offset="0.9" stop-color="#242424"/><stop offset="1" stop-color="#3a3a3a"/></linearGradient><clipPath id="c69"><path d="M1266 703C1256.2 702.7 1250.7 712.5 1241 720C1231.3 727.5 1218.2 738.2 1208 748C1197.8 757.8 1188.3 769.3 1180 779C1171.7 788.7 1164.7 798.2 1158 806C1151.3 813.8 1145 820 1140 826C1135 832 1128.7 835.7 1128 842C1127.3 848.3 1132.3 859 1136 864C1139.7 869 1145.5 871.6 1150 872C1154.5 872.4 1158 869.8 1163 866.5C1168 863.2 1173.1 857.5 1180 852.5C1186.9 847.5 1196.3 841.9 1204.5 836.6C1212.7 831.3 1220.8 825.3 1229 820.6C1237.2 815.9 1245.3 812.9 1253.5 808.4C1261.7 803.9 1269.8 798.2 1278 793.7C1286.2 789.2 1296.4 785.9 1302.5 781.4C1308.6 776.9 1311 772.3 1314.7 766.7C1318.4 761.1 1322.3 754 1324.5 748C1326.7 742 1332.1 735.3 1328 731C1323.9 726.7 1310.3 726.7 1300 722C1289.7 717.3 1275.8 703.3 1266 703Z"/></clipPath><linearGradient id="g70" gradientUnits="userSpaceOnUse" x1="1086" y1="829" x2="1009" y2="857"><stop offset="0" stop-color="#3a3a3a"/><stop offset="1" stop-color="#7c7c7c"/></linearGradient><linearGradient id="g71" gradientUnits="userSpaceOnUse" x1="1052" y1="880" x2="994" y2="928"><stop offset="0" stop-color="#6e6e6e"/><stop offset="0.62" stop-color="#8e8e8e"/><stop offset="0.74" stop-color="#4c4c4c"/><stop offset="1" stop-color="#2c2c2c"/></linearGradient><linearGradient id="g72" gradientUnits="userSpaceOnUse" x1="1062" y1="893" x2="999" y2="954.6"><stop offset="0" stop-color="#727272"/><stop offset="0.62" stop-color="#8e8e8e"/><stop offset="0.74" stop-color="#4c4c4c"/><stop offset="1" stop-color="#2c2c2c"/></linearGradient><linearGradient id="g73" gradientUnits="userSpaceOnUse" x1="1080" y1="904" x2="1021.6" y2="957.6"><stop offset="0" stop-color="#727272"/><stop offset="0.62" stop-color="#8e8e8e"/><stop offset="0.74" stop-color="#4c4c4c"/><stop offset="1" stop-color="#2c2c2c"/></linearGradient><linearGradient id="g74" gradientUnits="userSpaceOnUse" x1="1094" y1="914" x2="1048.4" y2="956"><stop offset="0" stop-color="#6e6e6e"/><stop offset="0.62" stop-color="#8e8e8e"/><stop offset="0.74" stop-color="#4c4c4c"/><stop offset="1" stop-color="#2c2c2c"/></linearGradient><linearGradient id="g75" gradientUnits="userSpaceOnUse" x1="1075" y1="835" x2="1120" y2="910"><stop offset="0" stop-color="#727272"/><stop offset="0.25" stop-color="#3a3a3a"/><stop offset="0.6" stop-color="#1e1e1e"/><stop offset="1" stop-color="#343434"/></linearGradient><clipPath id="c76"><path d="M1045.4 875C1045.4 872.2 1050.7 867.4 1054 864C1057.3 860.6 1069.5 850 1074 846C1078.5 842 1087.3 831.8 1093 829.7C1098.7 827.6 1117.8 827.3 1122.8 828.3C1127.8 829.3 1132.8 835.2 1136 838C1139.2 840.8 1147.4 848.1 1150 852C1152.6 855.9 1159.6 866.2 1158 871C1156.4 875.8 1141.2 888.1 1136 893C1130.8 897.9 1117.6 910.1 1113.8 913C1110 915.9 1106.9 918.4 1103.4 918C1099.9 917.6 1088.4 912.5 1084 910C1079.6 907.5 1069.5 899.6 1066 897C1062.5 894.4 1056.4 890.6 1054 888C1051.6 885.4 1045.4 877.8 1045.4 875Z"/></clipPath></defs><rect x="481.6" y="138.4" width="1319.9" height="858.4" fill="#383838"/><path d="M481.6 875.3H1801.5M481.6 889.9H1801.5M481.6 908.2H1801.5M481.6 930.2H1801.5M481.6 958.3H1801.5M481.6 995.8H1801.5M613.8 875.3L481 916.4M748.5 875.3L481 989M883 875.3L695.7 998M1421.2 875.3L1639.5 996.5M1554 875.3L1801.5 965.5M1686.9 875.3L1801.5 906.6M1288 875.3L1403 996.5M1017 875.3L990 997M1152 875.3L1190 997" stroke="#4b4b4b" stroke-width="1" fill="none"/><path d="M1267.6 138.4V258" stroke="#5f7d1f" stroke-width="1.3"/><path d="M1079 730L1130 750L1130 810L1108 838L1046 850L1040 800Z" fill="#414141" /><g clip-path="url(#c4)"><path d="M780 760H1080V1010H780Z" fill="url(#g1)" /><ellipse cx="890" cy="812" rx="70" ry="20" fill="#a4a4a4" filter="url(#b2)" transform="rotate(-8 890 812)"/><ellipse cx="1022" cy="930" rx="16" ry="80" fill="#7c7c7c" filter="url(#b3)"/><path d="M806 905C806.7 903.5 807.4 902.4 810 896C812.6 889.6 815 875.6 821.6 866.5C828.2 857.4 838 847.9 849.9 841.5C861.8 835.1 879.1 830.5 893 828C906.9 825.5 920.8 825.8 933 826.6C945.2 827.4 956.3 829.9 966 833C975.7 836.1 984.7 840.8 991 845C997.3 849.2 1000.4 851.7 1004 858C1007.6 864.3 1011 874.3 1012.7 883C1014.4 891.7 1013.8 905.5 1014 910L1004 935L800 960Z" fill="#8e8e8e" /><path d="M824 912C823.5 908.8 818.7 900.4 821 893C823.3 885.6 832 874.5 837.6 867.6C843.2 860.7 845.6 856.7 854.8 851.5C864 846.3 881.4 839.8 893 836.6C904.6 833.4 913.8 832.4 924.6 832.4C935.4 832.4 948.2 834.2 957.9 836.6C967.6 839 976.4 842.4 982.8 846.5C989.1 850.6 991.9 855.4 996 861.5C1000.1 867.6 1005.4 874.6 1007.7 883C1010 891.4 1009.6 907.2 1010 912L1004 935L830 935Z" fill="#606060" /></g><g clip-path="url(#c8)"><path d="M800 850H1020V1010H800Z" fill="url(#g5)" /><path d="M815 945C815.5 942.4 815.3 937.7 818.3 929.6C821.3 921.5 826.6 905 833 896.4C839.4 887.8 845.4 883.7 856.5 878C867.6 872.3 887 865.5 899.7 862.3C912.5 859.1 921.9 858.3 933 859C944.1 859.7 956.5 863.3 966.2 866.5C975.9 869.7 984.6 873.6 991 878C997.4 882.4 1001.5 888.3 1004.4 893C1007.3 897.7 1008.6 899.7 1008.6 906.4C1008.6 913.1 1005.1 928.6 1004.4 933" fill="none" stroke="#a8a8a8" stroke-width="2.5" filter="url(#b6)" /><ellipse cx="910" cy="1000" rx="110" ry="40" fill="#7a7a7a" filter="url(#b7)"/></g><g clip-path="url(#c16)"><path d="M850 430H1140V810H850Z" fill="url(#g9)" /><path d="M868 560L884 560L922 690L900 700Z" fill="#484848" filter="url(#b10)" opacity="0.8" /><ellipse cx="894" cy="545" rx="8" ry="60" fill="#a0a0a0" filter="url(#b11)" transform="rotate(-8 894 545)"/><ellipse cx="990" cy="760" rx="60" ry="30" fill="#8a8a8a" filter="url(#b12)"/><ellipse cx="1052" cy="790" rx="12" ry="44" fill="#8e8e8e" filter="url(#b11)" transform="rotate(16 1052 790)"/><ellipse cx="925" cy="720" rx="10" ry="40" fill="#4c4c4c" filter="url(#b10)" opacity="0.8"/><ellipse cx="1095" cy="640" rx="20" ry="50" fill="#4a4a4a" filter="url(#b2)"/><ellipse cx="1000" cy="520" rx="50" ry="25" fill="#8e8e8e" filter="url(#b13)" transform="rotate(35 1000 520)"/><path d="M916 684C921.6 687.8 938.5 700.9 949.6 707C960.7 713.1 971.7 717.7 982.8 720.5C993.9 723.3 1003.1 723.8 1016 724C1028.9 724.2 1052.7 722.3 1060 722" fill="none" stroke="#5c5c5c" stroke-width="4" filter="url(#b14)" /><path d="M918 690C923.3 693.8 938.8 706.9 949.6 713C960.4 719.1 971.7 723.7 982.8 726.5C993.9 729.3 1003.1 729.8 1016 730C1028.9 730.2 1052.7 728.3 1060 728" fill="none" stroke="#a4a4a4" stroke-width="2.6" filter="url(#b14)" /><path d="M880 785C886.7 785.8 906.7 788 920 790C933.3 792 946.7 794.3 960 797C973.3 799.7 987 803.5 1000 806C1013 808.5 1031.7 811 1038 812" fill="none" stroke="#4e4e4e" stroke-width="2.5" filter="url(#b15)" /><path d="M1040 800C1040.7 802 1044.7 808.3 1044 812C1043.3 815.7 1040.7 820.7 1036 822C1031.3 823.3 1019.3 820.3 1016 820" fill="none" stroke="#c0c0c0" stroke-width="2" filter="url(#b15)" /></g><g clip-path="url(#c18)"><path d="M930 400H1040V500H930Z" fill="url(#g17)" /><path d="M950 424L1026 462" fill="none" stroke="#5a5a5a" stroke-width="1.6" /><path d="M947 433L1026 473" fill="none" stroke="#5a5a5a" stroke-width="1.6" /><path d="M945 441L1026 484" fill="none" stroke="#5a5a5a" stroke-width="1.6" /></g><g clip-path="url(#c27)"><path d="M920 250H1120V470H920Z" fill="url(#g19)" /><ellipse cx="1005" cy="266" rx="55" ry="12" fill="#8d8d8d" filter="url(#b20)"/><g mask="url(#m24)"><g clip-path="url(#c22)"><path d="M1000 250H1130V470H1000Z" fill="url(#g21)" /><ellipse cx="1092" cy="440" rx="26" ry="50" fill="#1e1e1e" filter="url(#b12)" transform="rotate(12 1092 440)" opacity="0.9"/></g></g><path d="M973.4 296C978.1 295.6 993 293 1001.7 293.8C1010.4 294.6 1018.3 296.6 1025.4 300.9C1032.5 305.2 1039.2 312.7 1044.3 319.8C1049.4 326.9 1053.2 334.8 1056 343.4C1058.8 352 1060 361.1 1060.8 371.7C1061.6 382.3 1061.2 395.2 1061 407C1060.8 418.8 1059.6 433.4 1059.6 442.6C1059.6 451.8 1060.8 458.8 1061 462L1043 453L1010 437L976 420L955 411L944 400L938 370L940 330Z" fill="#7a7a7a" opacity="0.6"/><ellipse cx="1000" cy="425" rx="55" ry="12" fill="#707070" filter="url(#b20)" transform="rotate(25 1000 425)"/><ellipse cx="964.3" cy="345.6" rx="23" ry="34" fill="#828282" stroke="#6a6a6a" stroke-width="3"/><ellipse cx="964.8" cy="346.4" rx="20.6" ry="31.6" fill="none" stroke="#8c8c8c" stroke-width="1.2"/><path d="M944 338.7h10.5v11.8h-10.5z" fill="url(#g25)" /><path d="M974.6 338.7h10.5v9.5h-10.5z" fill="url(#g26)" /></g><g clip-path="url(#c32)"><path d="M870 440H1100V700H870Z" fill="url(#g28)" /><ellipse cx="935" cy="480" rx="34" ry="20" fill="#fff" filter="url(#b20)" transform="rotate(25 935 480)"/><ellipse cx="1030" cy="625" rx="30" ry="55" fill="#c8c8c8" filter="url(#b12)" transform="rotate(-30 1030 625)" opacity="0.9"/><path d="M886 506C886.5 509 887 518 889 524C891 530 893.2 535.7 898 542C902.8 548.3 911.7 555.3 918 562C924.3 568.7 929.3 573.7 936 582C942.7 590.3 950 601.3 958 612C966 622.7 975.3 633 984 646C992.7 659 1005.7 682.7 1010 690" fill="none" stroke="#8c8c8c" stroke-width="16" filter="url(#b29)" /><path d="M885 508C885.3 510.5 885.2 517.5 887 523C888.8 528.5 891.2 534.7 896 541C900.8 547.3 909.7 554.3 916 561C922.3 567.7 927.3 572.7 934 581C940.7 589.3 948 600.3 956 611C964 621.7 973.3 631.8 982 645C990.7 658.2 1003.7 682.5 1008 690" fill="none" stroke="#4c4c4c" stroke-width="5" filter="url(#b30)" /><path d="M996 513C998.7 517.3 1006.3 530.2 1012 539C1017.7 547.8 1027 561.5 1030 566" fill="none" stroke="#b8b8b8" stroke-width="6" filter="url(#b31)" /><path d="M1030 566C1033 570.3 1041.2 581.3 1048 592C1054.8 602.7 1065 620 1071 630C1077 640 1081.8 648.3 1084 652" fill="none" stroke="#8c8c8c" stroke-width="16" filter="url(#b10)" /></g><path d="M1018 672C1018.3 666.2 1022.3 655.7 1026 650C1029.7 644.3 1034 640.7 1040 638C1046 635.3 1055.3 633.3 1062 634C1068.7 634.7 1076.2 637.8 1080 642C1083.8 646.2 1090 653.7 1085 659C1080 664.3 1060.2 669.7 1050 674C1039.8 678.3 1029.3 685.3 1024 685C1018.7 684.7 1017.7 677.8 1018 672Z" fill="url(#g33)" /><path d="M1034 641.5L1047 640L1055 650L1051.5 665L1038 668.5L1030.5 656Z" fill="#f4f4f4" stroke="#b4b4b4" stroke-width="1.6"/><ellipse cx="1042.5" cy="654" rx="5.5" ry="8.5" fill="#b0b0b0" transform="rotate(12 1042.5 654)"/><path d="M1040.5 647L1044.5 661" stroke="#7c7c7c" stroke-width="1.6"/><ellipse cx="1068" cy="650" rx="8" ry="10" fill="#fff" filter="url(#b34)"/><g clip-path="url(#c41)"><path d="M1100 620H1380V1010H1100Z" fill="url(#g38)" /><path d="M1126 626C1130.8 624.3 1151.7 632.7 1165 634C1178.3 635.3 1195.2 635.3 1206 634C1216.8 632.7 1217.7 625 1230 626C1242.3 627 1270 627.7 1280 640C1290 652.3 1292.3 690.5 1290 700C1287.7 709.5 1277.7 698.3 1266 697C1254.3 695.7 1234.3 695.7 1220 692C1205.7 688.3 1191.3 681.3 1180 675C1168.7 668.7 1159.3 659.2 1152 654C1144.7 648.8 1140.3 648.7 1136 644C1131.7 639.3 1121.2 627.7 1126 626Z" fill="#626262" filter="url(#b37)" /><ellipse cx="1140" cy="640" rx="10" ry="6" fill="#a0a0a0" filter="url(#b31)"/><g clip-path="url(#c39)"><path d="M1090 450H1390V700H1090Z" fill="url(#g35)" /><ellipse cx="1122" cy="578" rx="22" ry="30" fill="#e8e8e8" filter="url(#b2)" transform="rotate(30 1122 578)"/><ellipse cx="1160" cy="548" rx="46" ry="14" fill="#efefef" filter="url(#b3)" transform="rotate(-28 1160 548)"/><ellipse cx="1340" cy="480" rx="40" ry="16" fill="#e2e2e2" filter="url(#b3)" transform="rotate(15 1340 480)"/><ellipse cx="1200" cy="614" rx="62" ry="22" fill="#525252" filter="url(#b36)" transform="rotate(5 1200 614)"/><ellipse cx="1255" cy="600" rx="30" ry="50" fill="#6a6a6a" filter="url(#b12)"/><path d="M1286 498C1290 495.3 1301 486.7 1310 482C1319 477.3 1331.7 472 1340 470C1348.3 468 1356.7 470 1360 470" fill="none" stroke="#bdbdbd" stroke-width="3" filter="url(#b37)" /></g><ellipse cx="1138" cy="680" rx="16" ry="34" fill="#d4d4d4" filter="url(#b20)"/><ellipse cx="1150" cy="780" rx="22" ry="30" fill="#b8b8b8" filter="url(#b3)"/><ellipse cx="1230" cy="730" rx="45" ry="28" fill="#6a6a6a" filter="url(#b13)"/><path d="M1122 650C1123 648.7 1125 643.3 1128 642C1131 640.7 1133.8 638.3 1140 642C1146.2 645.7 1155 657 1165 664C1175 671 1187.5 679.2 1200 684C1212.5 688.8 1228.3 691.3 1240 693C1251.7 694.7 1265 693.8 1270 694" fill="none" stroke="#444" stroke-width="3.4" filter="url(#b40)" /><path d="M1124 658C1126 656.7 1130 648.3 1136 650C1142 651.7 1150 661.3 1160 668C1170 674.7 1183 684.8 1196 690C1209 695.2 1225.3 697.3 1238 699C1250.7 700.7 1266.3 699.8 1272 700" fill="none" stroke="#dcdcdc" stroke-width="3" filter="url(#b14)" /><path d="M1126 806C1127 808 1128 814.7 1132 818C1136 821.3 1142.8 824.7 1150 826C1157.2 827.3 1170.8 826 1175 826" fill="none" stroke="#e0e0e0" stroke-width="3" filter="url(#b40)" /></g><path d="M1160 930C1161 924.2 1163.3 905.7 1166 895C1168.7 884.3 1170.7 874.8 1176 866C1181.3 857.2 1187.2 848.5 1198 842C1208.8 835.5 1226.8 830 1241 827C1255.2 824 1269 823 1283 824C1297 825 1313.7 828.3 1325 833C1336.3 837.7 1344.5 845.2 1351 852C1357.5 858.8 1361.3 866 1364 874C1366.7 882 1367.2 891.5 1367 900C1366.8 908.5 1363.7 920.8 1363 925L1360 940L1170 940Z" fill="url(#g42)" /><path d="M1172 930C1172.7 924.3 1173.7 906 1176 896C1178.3 886 1181.2 877.3 1186 870C1190.8 862.7 1195.8 857.2 1205 852C1214.2 846.8 1228.3 841.6 1241.3 839C1254.3 836.4 1269.3 835.5 1282.8 836.5C1296.2 837.5 1311.8 840.9 1322 845C1332.2 849.1 1338.7 855.2 1344 861C1349.3 866.8 1352 873.2 1354 880C1356 886.8 1356 894.5 1356 902C1356 909.5 1354.3 921.2 1354 925L1360 940L1170 940Z" fill="#2f2f2f" /><g clip-path="url(#c44)"><path d="M1100 880H1190V1010H1100Z" fill="url(#g43)" /><path d="M1128 905C1130 912.5 1134.7 936.7 1140 950C1145.3 963.3 1153.3 976.7 1160 985C1166.7 993.3 1176.7 997.5 1180 1000" fill="none" stroke="#6a6a6a" stroke-width="5" filter="url(#b6)" /></g><g clip-path="url(#c46)"><path d="M1160 850H1380V1010H1160Z" fill="url(#g45)" /><path d="M1179.8 899.7C1182 896.9 1185.5 888.3 1193 883C1200.5 877.7 1213.8 871.6 1224.6 868C1235.4 864.4 1252.4 862.6 1258 861.5" fill="none" stroke="#e6e6e6" stroke-width="5" filter="url(#b34)" /><path d="M1173 916C1174.1 913.3 1176.5 905.2 1179.8 899.7C1183.1 894.2 1185.5 888.3 1193 883C1200.5 877.7 1213.8 871.6 1224.6 868C1235.4 864.4 1246.9 862.5 1258 861.5C1269.1 860.5 1279.9 860.4 1291 862.3C1302.1 864.2 1318.8 871.2 1324.4 873" fill="none" stroke="#cfcfcf" stroke-width="2.2" filter="url(#b14)" /></g><g clip-path="url(#c47)"><path d="M1090 450H1390V700H1090Z" fill="url(#g35)" /><ellipse cx="1122" cy="578" rx="22" ry="30" fill="#e8e8e8" filter="url(#b2)" transform="rotate(30 1122 578)"/><ellipse cx="1160" cy="548" rx="46" ry="14" fill="#efefef" filter="url(#b3)" transform="rotate(-28 1160 548)"/><ellipse cx="1340" cy="480" rx="40" ry="16" fill="#e2e2e2" filter="url(#b3)" transform="rotate(15 1340 480)"/><ellipse cx="1200" cy="614" rx="62" ry="22" fill="#525252" filter="url(#b36)" transform="rotate(5 1200 614)"/><ellipse cx="1255" cy="600" rx="30" ry="50" fill="#6a6a6a" filter="url(#b12)"/><path d="M1286 498C1290 495.3 1301 486.7 1310 482C1319 477.3 1331.7 472 1340 470C1348.3 468 1356.7 470 1360 470" fill="none" stroke="#bdbdbd" stroke-width="3" filter="url(#b37)" /></g><g clip-path="url(#c50)"><path d="M1230 410H1345V490H1230Z" fill="url(#g48)" /><path d="M1248 470L1334 441" fill="none" stroke="#8c8c8c" stroke-width="1.6" filter="url(#b49)" /><path d="M1250 461L1334 432" fill="none" stroke="#909090" stroke-width="1.6" filter="url(#b49)" /></g><path d="M1269.6 451.5V485" stroke="#6f9030" stroke-width="1.5"/><g clip-path="url(#c55)"><path d="M1190 245H1370V465H1190Z" fill="url(#g51)" /><ellipse cx="1264" cy="292" rx="22" ry="42" fill="#e4e4e4" filter="url(#b13)" transform="rotate(15 1264 292)"/><ellipse cx="1335" cy="282" rx="26" ry="22" fill="#9c9c9c" filter="url(#b2)"/><ellipse cx="1215" cy="330" rx="10" ry="50" fill="#b8b8b8" filter="url(#b20)"/><ellipse cx="1225" cy="440" rx="25" ry="16" fill="#a4a4a4" filter="url(#b20)"/><path d="M1339.5 303C1332.7 302.8 1326.6 302.8 1321 304C1315.4 305.2 1311.8 305.7 1306 310C1300.2 314.3 1291.2 323.3 1286 330C1280.8 336.7 1278.3 343.7 1275 350C1271.7 356.3 1268.5 361.4 1266 368C1263.5 374.6 1262.2 380.8 1260 389.5C1257.8 398.2 1255.5 409.6 1253 420C1250.5 430.4 1245 445.7 1245 452C1245 458.3 1247.8 458.3 1253 458C1258.2 457.7 1268 453 1276 450C1284 447 1291.8 443.8 1301 440C1310.2 436.2 1323.7 430.2 1331 427C1338.3 423.8 1341.5 424.5 1345 421C1348.5 417.5 1349.2 412.3 1352 406C1354.8 399.7 1359.3 390.2 1362 383C1364.7 375.8 1367 373 1368 363C1369 353 1369 332.7 1368 323C1367 313.3 1366.8 308.3 1362 305C1357.2 301.7 1346.3 303.2 1339.5 303Z" fill="url(#g52)" /><path d="M1248 452C1250.3 444.2 1255.8 422.8 1262 405C1268.2 387.2 1277 360.5 1285 345C1293 329.5 1305.8 317.5 1310 312" fill="none" stroke="#9a9a9a" stroke-width="3" filter="url(#b37)" opacity="0.8" /><ellipse cx="1345.5" cy="361" rx="15" ry="31" fill="#666" stroke="#b4b4b4" stroke-width="1.8"/><ellipse cx="1344.5" cy="360" rx="17.5" ry="33.5" fill="none" stroke="#4c4c4c" stroke-width="1.6"/><path d="M1331.3 354h7v11.5h-7z" fill="url(#g53)" /><path d="M1352.5 355h7.5v11h-7.5z" fill="url(#g54)" /></g><g clip-path="url(#c58)"><path d="M1250 450H1400V740H1250Z" fill="url(#g56)" /><path d="M1260 640L1330 640L1340 740L1250 740Z" fill="#fff" filter="url(#b57)" opacity="0" /><ellipse cx="1280" cy="694" rx="18" ry="9" fill="#fff" filter="url(#b31)" transform="rotate(15 1280 694)"/><path d="M1292 508C1293.3 505 1296.3 495.7 1300 490C1303.7 484.3 1308.3 478.2 1314 474C1319.7 469.8 1326.7 466.3 1334 465C1341.3 463.7 1351.3 464.2 1358 466C1364.7 467.8 1371.3 474.3 1374 476" fill="none" stroke="#f2f2f2" stroke-width="8" filter="url(#b37)" /><path d="M1290 700C1292 694.7 1305.3 691.3 1312 690C1318.7 688.7 1326.7 688.3 1330 692C1333.3 695.7 1332.3 705.5 1332 712C1331.7 718.5 1333.3 729.3 1328 731C1322.7 732.7 1306.3 727.2 1300 722C1293.7 716.8 1288 705.3 1290 700Z" fill="#4a4a4a" /><ellipse cx="1321" cy="707" rx="6" ry="11" fill="#b0b0b0" transform="rotate(18 1321 707)"/><path d="M1266 690C1270 691 1281.7 696.3 1290 696C1298.3 695.7 1309.3 689 1316 688C1322.7 687 1327.2 687.2 1330 690C1332.8 692.8 1332.5 702.5 1333 705" fill="none" stroke="#e8e8e8" stroke-width="2.5" filter="url(#b15)" /></g><g clip-path="url(#c61)"><path d="M990 640H1270V840H990Z" fill="url(#g59)" /><ellipse cx="1036" cy="704" rx="40" ry="26" fill="#8c8c8c" filter="url(#b36)"/><ellipse cx="1075" cy="672" rx="30" ry="10" fill="#c4c4c4" filter="url(#b11)" transform="rotate(-20 1075 672)"/><ellipse cx="1185" cy="765" rx="34" ry="9" fill="#fff" filter="url(#b11)" transform="rotate(38 1185 765)"/><path d="M1006 700C1008.8 702.8 1014 711.3 1023 717C1032 722.7 1048.3 728.3 1060 734C1071.7 739.7 1082 746 1093 751C1104 756 1112.8 758 1126 764C1139.2 770 1158 778.8 1172 787C1186 795.2 1203.7 808.7 1210 813" fill="none" stroke="#555" stroke-width="9" filter="url(#b60)" /><path d="M1012 686C1018.3 683.8 1037.7 677.5 1050 673C1062.3 668.5 1080 661.3 1086 659" fill="none" stroke="#d8d8d8" stroke-width="5" filter="url(#b34)" /></g><path d="M1231 820C1228.8 815.7 1251.1 806.3 1262 800C1272.9 793.7 1288.7 783.5 1296.4 782C1304.1 780.5 1307.2 787.3 1308 791C1308.8 794.7 1304.3 799.5 1301 804C1297.7 808.5 1292.2 814.3 1288 818C1283.8 821.7 1285 825.7 1275.5 826C1266 826.3 1233.2 824.3 1231 820Z" fill="url(#g62)" /><path d="M1298.2 857.1L1303.4 859.2Q1307.7 859.2 1308 858.6Q1308.3 858 1305.1 855L1299.8 852.9Z" fill="url(#g63)" /><path d="M1301.4 858.4L1303.1 854.2" stroke="#dcdcdc" stroke-width="1.2"/><path d="M1304.3 859.5L1306 855.4" stroke="#dcdcdc" stroke-width="1.2"/><path d="M1293.2 841.3L1326.3 859.8Q1333.5 860.8 1334 859.8Q1334.5 858.8 1329.9 853.2L1296.8 834.7Z" fill="url(#g64)" /><path d="M1307.2 849.1L1310.9 842.6" stroke="#dcdcdc" stroke-width="1.2"/><path d="M1319.7 856.1L1323.3 849.6" stroke="#dcdcdc" stroke-width="1.2"/><path d="M1286.6 815.8L1346.7 853.2Q1355.3 854.8 1356 853.7Q1356.7 852.6 1351.5 845.6L1291.4 808.2Z" fill="url(#g65)" /><path d="M1310.7 830.8L1315.5 823.2" stroke="#dcdcdc" stroke-width="1.2"/><path d="M1332.2 844.2L1336.9 836.5" stroke="#dcdcdc" stroke-width="1.2"/><path d="M1301.5 798.7L1349.6 830.9Q1358 832.8 1358.8 831.7Q1359.6 830.6 1354.6 823.5L1306.5 791.3Z" fill="url(#g66)" /><path d="M1321.2 812L1326.2 804.5" stroke="#dcdcdc" stroke-width="1.2"/><path d="M1338.8 823.7L1343.8 816.2" stroke="#dcdcdc" stroke-width="1.2"/><path d="M1311 764.1L1331.5 769.3Q1339.7 768.2 1340 767Q1340.3 765.8 1333.6 761L1313 755.9Z" fill="url(#g67)" /><path d="M1321 766.6L1323.1 758.4" stroke="#dcdcdc" stroke-width="1.2"/><path d="M1330 768.9L1332.1 760.6" stroke="#dcdcdc" stroke-width="1.2"/><g clip-path="url(#c69)"><path d="M1110 690H1340V890H1110Z" fill="url(#g68)" /><ellipse cx="1278" cy="712" rx="26" ry="12" fill="#bdbdbd" filter="url(#b10)" transform="rotate(-30 1278 712)"/><ellipse cx="1150" cy="850" rx="14" ry="18" fill="#2c2c2c" filter="url(#b11)"/></g><ellipse cx="1146" cy="849" rx="11" ry="24" fill="none" stroke="#7c7c7c" stroke-width="2.2" transform="rotate(-38 1146 849)"/><path d="M1083.4 822L1019.1 845.3Q1008.2 854.9 1009 857Q1009.8 859.1 1024.3 859.4L1088.6 836Z" fill="url(#g70)" /><path d="M1055.7 832L1060.8 846.1" stroke="#3a3a3a" stroke-width="1.2"/><path d="M1031.1 841L1036.2 855.1" stroke="#3a3a3a" stroke-width="1.2"/><path d="M1048.2 875.4L998.5 916.5Q992.9 926.6 994 928Q995.1 929.4 1006.1 925.7L1055.8 884.6Z" fill="url(#g71)" /><path d="M1027.3 892.7L1034.9 901.9" stroke="#3a3a3a" stroke-width="1.2"/><path d="M1008.7 908L1016.4 917.3" stroke="#3a3a3a" stroke-width="1.2"/><path d="M1057.8 888.7L1002.5 942.8Q997.7 953.3 999 954.6Q1000.3 955.9 1010.9 951.3L1066.2 897.3Z" fill="url(#g72)" /><path d="M1035.1 910.9L1043.5 919.5" stroke="#3a3a3a" stroke-width="1.2"/><path d="M1015 930.6L1023.4 939.2" stroke="#3a3a3a" stroke-width="1.2"/><path d="M1075.9 899.6L1025.5 945.9Q1020.4 956.3 1021.6 957.6Q1022.8 958.9 1033.6 954.7L1084.1 908.4Z" fill="url(#g73)" /><path d="M1054.9 918.9L1063 927.7" stroke="#3a3a3a" stroke-width="1.2"/><path d="M1036.2 936L1044.3 944.9" stroke="#3a3a3a" stroke-width="1.2"/><path d="M1090.3 910L1052 945.2Q1047.3 954.8 1048.4 956Q1049.5 957.2 1059.4 953.3L1097.7 918Z" fill="url(#g74)" /><path d="M1073.9 925.1L1081.3 933.2" stroke="#3a3a3a" stroke-width="1.2"/><path d="M1059.3 938.5L1066.7 946.6" stroke="#3a3a3a" stroke-width="1.2"/><g clip-path="url(#c76)"><path d="M1030 810H1170V930H1030Z" fill="url(#g75)" /><ellipse cx="1070" cy="848" rx="18" ry="8" fill="#6e6e6e" filter="url(#b29)" transform="rotate(-30 1070 848)"/></g><rect x="916.9" y="232.2" width="448.6" height="671.6" fill="none" stroke="#c41212" stroke-width="1.5"/></svg>
<span class="t" style="left:20.00px;top:14.61px;font-size:14.25px;font-weight:400;color:#6b7280;letter-spacing:0.110px">Stable Diffusion checkpoint</span>
<span class="t" style="left:26.00px;top:37.61px;font-size:14.25px;font-weight:400;color:#1f2937;letter-spacing:-0.054px">AOM3A1.safetensors [f303d10812]</span>
<span class="t" style="left:32.50px;top:98.37px;font-size:16.28px;font-weight:400;color:#9ca3af;letter-spacing:0.677px">txt2img</span>
<span class="t" style="left:129.50px;top:98.37px;font-size:16.28px;font-weight:400;color:#9ca3af;letter-spacing:0.589px">img2img</span>
<span class="t" style="left:235.00px;top:98.37px;font-size:16.28px;font-weight:400;color:#9ca3af;letter-spacing:-0.322px">Extras</span>
<span class="t" style="left:320.00px;top:98.37px;font-size:16.28px;font-weight:400;color:#9ca3af;letter-spacing:-0.272px">PNG Info</span>
<span class="t" style="left:425.50px;top:98.37px;font-size:16.28px;font-weight:400;color:#9ca3af;letter-spacing:0.192px">Checkpoint Merger</span>
<span class="t" style="left:607.00px;top:98.37px;font-size:16.28px;font-weight:400;color:#9ca3af;letter-spacing:0.008px">Train</span>
<span class="t" style="left:684.75px;top:98.37px;font-size:16.28px;font-weight:400;color:#9ca3af;letter-spacing:0.062px">OpenPose Editor</span>
<span class="t" style="left:850.00px;top:98.37px;font-size:16.28px;font-weight:400;color:#000;letter-spacing:-0.561px">Pose As3D</span>
<span class="t" style="left:967.50px;top:98.37px;font-size:16.28px;font-weight:400;color:#9ca3af;letter-spacing:0.279px">Depth Library</span>
<span class="t" style="left:1109.00px;top:98.37px;font-size:16.28px;font-weight:400;color:#9ca3af;letter-spacing:0.053px">Tagger</span>
<span class="t" style="left:1200.00px;top:98.37px;font-size:16.28px;font-weight:400;color:#9ca3af;letter-spacing:0.103px">Settings</span>
<span class="t" style="left:1300.00px;top:98.37px;font-size:16.28px;font-weight:400;color:#9ca3af;letter-spacing:-0.036px">Extensions</span>
<span class="t" style="left:44.00px;top:151.77px;font-size:16.28px;font-weight:400;color:#9ca3af;letter-spacing:-0.286px">Scene Graph</span>
<span class="t" style="left:178.00px;top:151.77px;font-size:16.28px;font-weight:400;color:#000;letter-spacing:0.180px">Rendering</span>
<span class="t" style="left:295.00px;top:151.77px;font-size:16.28px;font-weight:400;color:#9ca3af;letter-spacing:-0.172px">Camera</span>
<span class="t" style="left:44.00px;top:773.67px;font-size:16.28px;font-weight:400;color:#000;letter-spacing:0.148px">Depth</span>
<span class="t" style="left:129.50px;top:773.67px;font-size:16.28px;font-weight:400;color:#9ca3af;letter-spacing:0.521px">Blur</span>
<span class="t" style="left:200.75px;top:773.67px;font-size:16.28px;font-weight:400;color:#9ca3af;letter-spacing:0.074px">Sample Models</span>
<span class="t" style="left:56.50px;top:183.91px;font-size:14.25px;font-weight:400;color:#6b7280;letter-spacing:0.266px">Width</span>
<span class="t" style="left:56.50px;top:238.41px;font-size:14.25px;font-weight:400;color:#6b7280;letter-spacing:0.259px">Height</span>
<span class="t" style="left:56.50px;top:292.61px;font-size:14.25px;font-weight:400;color:#6b7280;letter-spacing:-0.111px">Field of View</span>
<span class="t" style="left:56.50px;top:365.41px;font-size:14.25px;font-weight:400;color:#6b7280;letter-spacing:-0.234px">Render Mode</span>
<span class="t" style="left:63.00px;top:398.61px;font-size:14.25px;font-weight:400;color:#1f2937;letter-spacing:-0.028px">Shaded</span>
<span class="t" style="left:75.75px;top:472.41px;font-size:14.25px;font-weight:400;color:#374151;letter-spacing:-0.057px">Grid</span>
<span class="t" style="left:75.75px;top:518.61px;font-size:14.25px;font-weight:400;color:#374151;letter-spacing:0.116px">Black Backgound</span>
<span class="t" style="left:56.50px;top:804.91px;font-size:14.25px;font-weight:400;color:#6b7280;letter-spacing:-0.380px">Near</span>
<span class="t" style="left:56.50px;top:859.61px;font-size:14.25px;font-weight:400;color:#6b7280;letter-spacing:-1.062px">Far</span>
<span class="t" style="left:56.50px;top:914.21px;font-size:14.25px;font-weight:400;color:#6b7280;letter-spacing:-0.297px">Gamma</span>
<span class="t" style="left:56.50px;top:968.91px;font-size:14.25px;font-weight:400;color:#6b7280;letter-spacing:0.258px">Amplifier</span>
<span class="t" style="left:60.75px;top:592.27px;font-size:16.28px;font-weight:700;color:#ea580c;letter-spacing:-0.259px">Append</span>
<span class="t" style="left:67.50px;top:619.27px;font-size:16.28px;font-weight:700;color:#ea580c;letter-spacing:-0.188px">Model</span>
<span class="t" style="left:216.50px;top:592.27px;font-size:16.28px;font-weight:700;color:#374151;letter-spacing:-0.175px">Unload</span>
<span class="t" style="left:221.00px;top:619.27px;font-size:16.28px;font-weight:700;color:#374151;letter-spacing:-0.797px">Scene</span>
<span class="t" style="left:352.75px;top:605.77px;font-size:16.28px;font-weight:700;color:#374151;letter-spacing:-0.253px">Save Image</span>
<span class="t" style="left:48.00px;top:697.27px;font-size:16.28px;font-weight:700;color:#374151;letter-spacing:-0.604px">Save Scene</span>
<span class="t" style="left:200.75px;top:697.27px;font-size:16.28px;font-weight:700;color:#374151;letter-spacing:-0.616px">Load Scene</span>
<span class="t" style="left:377.50px;top:683.57px;font-size:16.28px;font-weight:700;color:#374151;letter-spacing:-0.760px">Send</span>
<span class="t" style="left:354.50px;top:710.57px;font-size:16.28px;font-weight:700;color:#374151;letter-spacing:-0.059px">ControlNet</span>
<span class="t" style="left:763.00px;top:1075.91px;font-size:14.25px;font-weight:400;color:#374151;letter-spacing:-1.109px">API</span>
<span class="t" style="left:827.00px;top:1075.91px;font-size:14.25px;font-weight:400;color:#374151;letter-spacing:0.350px">Github</span>
<span class="t" style="left:914.25px;top:1075.91px;font-size:14.25px;font-weight:400;color:#374151;letter-spacing:-0.056px">Gradio</span>
<span class="t" style="left:999.50px;top:1075.91px;font-size:14.25px;font-weight:400;color:#374151;letter-spacing:-0.141px">Reload UI</span>
<span class="t" style="left:803.15px;top:1077.50px;font-size:12.49px;font-weight:400;color:#374151;letter-spacing:0.000px">•</span>
<span class="t" style="left:889.90px;top:1077.50px;font-size:12.49px;font-weight:400;color:#374151;letter-spacing:0.000px">•</span>
<span class="t" style="left:975.40px;top:1077.50px;font-size:12.49px;font-weight:400;color:#374151;letter-spacing:0.000px">•</span>
<span class="t" style="left:545.50px;top:1100.45px;font-size:12.21px;font-weight:400;color:#6b7280;letter-spacing:0.061px">python: 3.10.10</span>
<span class="t" style="left:653.75px;top:1100.45px;font-size:12.21px;font-weight:400;color:#6b7280;letter-spacing:0.010px">torch: 1.13.1+cu117</span>
<span class="t" style="left:784.50px;top:1100.45px;font-size:12.21px;font-weight:400;color:#6b7280;letter-spacing:-0.035px">xformers: 0.0.16rc425</span>
<span class="t" style="left:925.75px;top:1100.45px;font-size:12.21px;font-weight:400;color:#6b7280;letter-spacing:-0.069px">gradio: 3.16.2</span>
<span class="t" style="left:1023.25px;top:1100.45px;font-size:12.21px;font-weight:400;color:#6b7280;letter-spacing:0.098px">commit: 0cc0ee1b</span>
<span class="t" style="left:1147.50px;top:1100.45px;font-size:12.21px;font-weight:400;color:#6b7280;letter-spacing:0.115px">checkpoint: f303d10812</span>
<span class="t" style="left:639.80px;top:1101.87px;font-size:10.64px;font-weight:400;color:#6b7280;letter-spacing:0.000px">•</span>
<span class="t" style="left:770.30px;top:1101.87px;font-size:10.64px;font-weight:400;color:#6b7280;letter-spacing:0.000px">•</span>
<span class="t" style="left:912.30px;top:1101.87px;font-size:10.64px;font-weight:400;color:#6b7280;letter-spacing:0.000px">•</span>
<span class="t" style="left:1009.55px;top:1101.87px;font-size:10.64px;font-weight:400;color:#6b7280;letter-spacing:0.000px">•</span>
<span class="t" style="left:1133.05px;top:1101.87px;font-size:10.64px;font-weight:400;color:#6b7280;letter-spacing:0.000px">•</span>
<span class="t" style="left:375.00px;top:189.01px;font-size:14.25px;font-weight:400;color:#374151;letter-spacing:-0.391px">400</span>
<span class="t" style="left:375.00px;top:243.51px;font-size:14.25px;font-weight:400;color:#374151;letter-spacing:-0.391px">600</span>
<span class="t" style="left:377.00px;top:297.51px;font-size:14.25px;font-weight:400;color:#374151;letter-spacing:-0.406px">0.8</span>
<span class="t" style="left:382.50px;top:811.01px;font-size:14.25px;font-weight:400;color:#374151;letter-spacing:0.000px">0</span>
<span class="t" style="left:372.50px;top:865.31px;font-size:14.25px;font-weight:400;color:#374151;letter-spacing:-0.083px">2.84</span>
<span class="t" style="left:372.50px;top:919.81px;font-size:14.25px;font-weight:400;color:#374151;letter-spacing:-0.083px">1.05</span>
<span class="t" style="left:372.50px;top:974.31px;font-size:14.25px;font-weight:400;color:#374151;letter-spacing:-0.083px">2.38</span>
</div></body></html>
